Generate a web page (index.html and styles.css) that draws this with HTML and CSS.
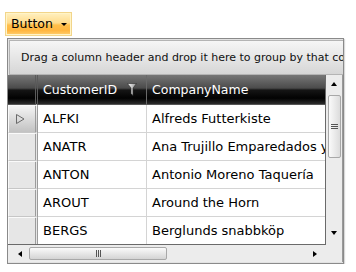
FILE: index.html
```html
<!DOCTYPE html>
<html>
<head>
<meta charset="utf-8">
<link rel="stylesheet" href="styles.css">
</head>
<body>
<div class="btn"><span class="btn-label">Button</span><span class="btn-arrow"></span></div>
<div class="grid">
  <div class="group-panel">Drag a column header and drop it here to group by that column</div>
  <div class="body">
    <div class="main">
      <div class="row header">
        <div class="ind"></div>
        <div class="cell c1">CustomerID
          <svg class="filter" width="10" height="13" viewBox="0 0 10 13"><defs><linearGradient id="fg" x1="0" y1="0" x2="1" y2="0"><stop offset="0" stop-color="#ffffff"/><stop offset="1" stop-color="#909090"/></linearGradient></defs><path d="M0.5 0.5 H9.5 L6 5 V12.5 L4 10.5 V5 Z" fill="url(#fg)" stroke="#2a2a2a" stroke-width="0.6"/></svg>
        </div>
        <div class="cell c2">CompanyName</div>
      </div>
      <div class="row sel"><div class="ind"><svg width="10" height="10" viewBox="0 0 10 10"><path d="M1.5 0.5 L9 5 L1.5 9.5 Z" fill="none" stroke="#6a6a6a" stroke-width="1"/></svg></div><div class="cell c1">ALFKI</div><div class="cell c2">Alfreds Futterkiste</div></div>
      <div class="row"><div class="ind"></div><div class="cell c1">ANATR</div><div class="cell c2">Ana Trujillo Emparedados y helados</div></div>
      <div class="row"><div class="ind"></div><div class="cell c1">ANTON</div><div class="cell c2">Antonio Moreno Taquería</div></div>
      <div class="row"><div class="ind"></div><div class="cell c1">AROUT</div><div class="cell c2">Around the Horn</div></div>
      <div class="row last"><div class="ind"></div><div class="cell c1">BERGS</div><div class="cell c2">Berglunds snabbköp</div></div>
    </div>
    <div class="vscroll">
      <div class="arr up"></div>
      <div class="vtrack"><div class="vthumb"><span class="grip"></span></div></div>
      <div class="arr down"></div>
    </div>
  </div>
  <div class="hbar">
    <div class="hscroll">
      <div class="arr left"></div>
      <div class="htrack"><div class="hthumb"><span class="hgrip"></span></div></div>
      <div class="arr right"></div>
    </div>
    <div class="corner"></div>
  </div>
</div>
</body>
</html>
```
FILE: styles.css
```css
html, body { margin: 0; padding: 0; background: #fff; }
body { font-family: "DejaVu Sans", Verdana, sans-serif; font-size: 12px; color: #000; }

.btn {
  margin: 12px 0 0 5px;
  width: 65px; height: 22px;
  border: 1px solid #f2d58a;
  box-shadow: inset 0 0 0 1px #fff4c8;
  background: linear-gradient(#fff0c0 0%, #ffdc8c 45%, #ffbf4a 55%, #ffb640 80%, #ffcf70 100%);
  display: flex; align-items: center;
  box-sizing: content-box;
}
.btn-label { padding-left: 5px; line-height: 22px; font-size: 12.5px; }
.btn-arrow {
  margin-left: 8px; margin-top: 1px;
  width: 0; height: 0;
  border-left: 3px solid transparent; border-right: 3px solid transparent;
  border-top: 3px solid #000;
}

.grid {
  margin: 2px 0 0 7px;
  width: 335px; height: 224px;
  border: 1px solid #8a8a8a;
  background: #e2e2e2;
  box-shadow: 1px 1px 1px rgba(0,0,0,0.15);
  display: flex; flex-direction: column;
  overflow: hidden;
}
.group-panel {
  margin: 1px 0 0 1px;
  height: 33px;
  border: 1px solid #b4b4b4; border-right: none;
  background: linear-gradient(#f6f6f6, #d6d6d6);
  font-size: 11px; line-height: 33px;
  padding-left: 11px;
  white-space: nowrap; overflow: hidden;
  color: #111;
}
.body { display: flex; flex: 0 0 auto; height: 170px; }
.main { width: 319px; overflow: hidden; background: #fff; border-bottom: 1px solid #6a6a6a; border-right: 1px solid #6a6a6a; box-sizing: border-box; }
.row { display: flex; height: 28px; }
.row .cell { border-bottom: 1px solid #d4d4d4; border-right: 1px solid #d4d4d4; box-sizing: border-box; padding-left: 5px; line-height: 27px; white-space: nowrap; overflow: hidden; flex: none; font-size: 13px; }
.c1 { width: 109px; position: relative; }
.c2 { width: 190px; }
.ind {
  width: 30px; flex: none; box-sizing: border-box;
  background: #e6e6e6;
  border-top: 1px solid #fafafa; border-left: 1px solid #fafafa;
  border-bottom: 1px solid #c6c6c6;
  border-right: 3px double #9c9c9c;
  display: flex; align-items: center; justify-content: center;
}
.row.sel .ind { background: linear-gradient(#f4f4f4, #c2c2c2); }
.row.sel .ind svg { margin-left: -4px; }

.row.header { height: 30px; }
.header .ind, .header .cell {
  background: linear-gradient(#777 0%, #4b4b4b 45%, #151515 52%, #020202 80%, #2c2c2c 100%);
  border-bottom: 1px solid #555;
  border-right: 1px solid #6a6a6a;
  color: #fff;
  line-height: 29px;
}
.row.header .cell { font-size: 12.5px; }
.header .ind { border-top: none; border-left: none; border-right: 3px double #5a5a5a; }
.filter { position: absolute; left: 89px; top: 8px; }

.vscroll { width: 16px; background: #ececec; display: flex; flex-direction: column; align-items: center; border-right: 1px solid #9a9a9a; }
.arr { width: 0; height: 0; }
.arr.up { margin-top: 7px; border-left: 3px solid transparent; border-right: 3px solid transparent; border-bottom: 4px solid #000; }
.arr.down { margin: 0 0 10px; border-left: 3px solid transparent; border-right: 3px solid transparent; border-top: 4px solid #000; }
.vtrack { flex: 1; width: 100%; padding-top: 9px; box-sizing: border-box; }
.vthumb {
  margin: 0 auto; width: 11px; height: 61px;
  border: 1px solid #a8a8a8; border-radius: 2px;
  background: linear-gradient(90deg, #fafafa, #dcdcdc);
  display: flex; align-items: center; justify-content: center;
}
.grip { width: 7px; height: 5px; border-top: 1px solid #555; border-bottom: 1px solid #555; position: relative; box-sizing: border-box; }
.grip::after { content: ""; position: absolute; left: 0; right: 0; top: 1px; border-top: 1px solid #555; }

.hbar { display: flex; height: 17px; }
.hscroll { width: 319px; background: #ececec; display: flex; align-items: center; }
.arr.left { margin-left: 10px; border-top: 3px solid transparent; border-bottom: 3px solid transparent; border-right: 4px solid #000; }
.arr.right { margin-right: 10px; border-top: 3px solid transparent; border-bottom: 3px solid transparent; border-left: 4px solid #000; }
.htrack { flex: 1; height: 100%; display: flex; align-items: center; padding-left: 7px; }
.hthumb {
  width: 136px; height: 11px;
  border: 1px solid #a8a8a8; border-radius: 2px;
  background: linear-gradient(#fafafa, #d4d4d4);
  display: flex; align-items: center; justify-content: center;
}
.hgrip { width: 5px; height: 7px; border-left: 1px solid #555; border-right: 1px solid #555; position: relative; box-sizing: border-box; }
.hgrip::after { content: ""; position: absolute; top: 0; bottom: 0; left: 1px; border-left: 1px solid #555; }
.corner { flex: 1; background: #ececec; border-right: 1px solid #9a9a9a; }
```
